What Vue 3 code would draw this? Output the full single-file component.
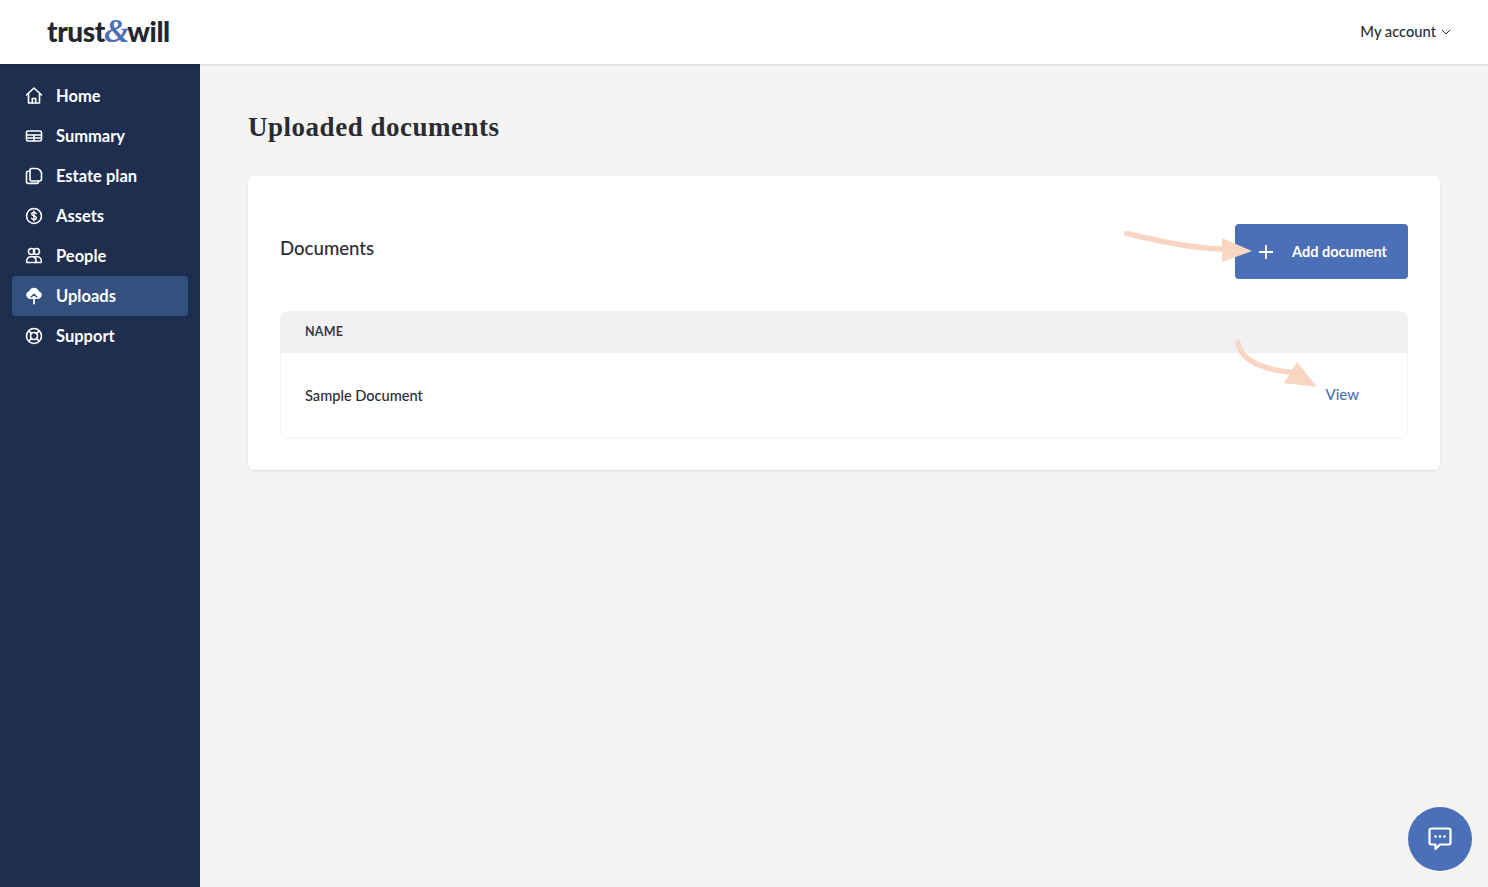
<script setup>
const nav = [
  { label: 'Home', icon: 'home' },
  { label: 'Summary', icon: 'summary' },
  { label: 'Estate plan', icon: 'estate' },
  { label: 'Assets', icon: 'assets' },
  { label: 'People', icon: 'people' },
  { label: 'Uploads', icon: 'uploads', active: true },
  { label: 'Support', icon: 'support' },
]
</script>

<template>
  <div class="app">
    <header class="topbar">
      <div class="logo">trust<span class="amp">&amp;</span>will</div>
      <div class="account">
        <span>My account</span>
        <svg class="chev" width="10" height="6" viewBox="0 0 10 6" fill="none"><path d="M1 1l4 4 4-4" stroke="#2a2c33" stroke-width="1"/></svg>
      </div>
    </header>
    <div class="body">
      <aside class="sidebar">
        <a v-for="item in nav" :key="item.label" class="nav-item" :class="{ active: item.active }">
          <svg class="nav-icon" width="20" height="20" viewBox="0 0 20 20" fill="none" stroke="#fff" stroke-width="1.6" stroke-linejoin="round" stroke-linecap="round">
            <template v-if="item.icon === 'home'">
              <path d="M2.500 9 10 2l7.500 7" />
              <path d="M4.500 7.500V17h11V7.500" />
              <path d="M8.300 17v-4.500h3.400V17" />
            </template>
            <template v-else-if="item.icon === 'summary'">
              <rect x="2.500" y="5" width="15" height="10" rx="1.500" />
              <path d="M2.500 9h15M2.500 12h15M10 9v6" />
            </template>
            <template v-else-if="item.icon === 'estate'">
              <path d="M7.500 2.500h4.500a5.500 5.500 0 0 1 5.500 5.500v5a2 2 0 0 1-2 2H7.500a1.500 1.500 0 0 1-1.500-1.500V4a1.500 1.500 0 0 1 1.500-1.500z" />
              <path d="M6 5.200H4a1.500 1.500 0 0 0-1.500 1.500v9.200A1.500 1.500 0 0 0 4 17.400h9a1.500 1.500 0 0 0 1.500-1.500V15" />
            </template>
            <template v-else-if="item.icon === 'assets'">
              <circle cx="10" cy="10" r="7.500" />
              <path d="M12.300 7.600c-.4-.8-1.200-1.200-2.300-1.200-1.300 0-2.300.7-2.300 1.700 0 2.400 4.700 1.300 4.700 3.700 0 1-1 1.800-2.400 1.800-1.200 0-2.100-.5-2.500-1.300M10 5v10" stroke-width="1.400" />
            </template>
            <template v-else-if="item.icon === 'people'">
              <circle cx="7.500" cy="5.500" r="3" />
              <circle cx="12.500" cy="5.500" r="3" />
              <path d="M2.700 16.500v-1.700a4 4 0 0 1 4-4h6.600a4 4 0 0 1 4 4v1.700z" />
              <path d="M10 11a4 4 0 0 1 2 3.500v2" />
            </template>
            <template v-else-if="item.icon === 'uploads'">
              <path d="M6 12.500a3.500 3.500 0 0 1-.6-6.900 4.800 4.800 0 0 1 9.200 0 3.500 3.500 0 0 1-.6 6.900z" fill="#fff" stroke-width="1" />
              <path d="M7.200 11 10 8.200l2.800 2.800" stroke="#34507f" stroke-width="1.400" />
              <path d="M10 11.500v6" stroke-width="1.800" />
            </template>
            <template v-else>
              <circle cx="10" cy="10" r="7.500" />
              <circle cx="10" cy="10" r="3.500" />
              <path d="m4.800 4.800 2.700 2.700M15.200 4.800l-2.700 2.700M4.800 15.200l2.700-2.700M15.200 15.200l-2.700-2.700" stroke-width="1.800" />
            </template>
          </svg>
          <span class="nav-label">{{ item.label }}</span>
        </a>
      </aside>
      <main class="main">
        <h1 class="title">Uploaded documents</h1>
        <section class="card">
          <div class="card-head">
            <h2 class="card-title">Documents</h2>
            <button class="add-btn">
              <svg width="14" height="14" viewBox="0 0 14 14" fill="none"><path d="M7 0v14M0 7h14" stroke="#fff" stroke-width="1.800"/></svg>
              <span class="add-label">Add document</span>
            </button>
          </div>
          <div class="table">
            <div class="thead"><span class="thead-label">NAME</span></div>
            <div class="row">
              <span class="doc-name">Sample Document</span>
              <a class="view">View</a>
            </div>
          </div>
        </section>
      </main>
    </div>

    <svg class="arrow arrow-one" width="130" height="40" viewBox="0 0 130 40" fill="none">
      <path d="M3 2.500C30 9 70 18 100 18" stroke="#f9d6c1" stroke-width="5.500" stroke-linecap="round"/>
      <path d="M98 7 128 20 98 31z" fill="#f9d6c1"/>
    </svg>
    <svg class="arrow arrow-two" width="84" height="50" viewBox="0 0 84 50" fill="none">
      <path d="M3 3C6 22 30 30 62 33" stroke="#f9d6c1" stroke-width="5.500" stroke-linecap="round"/>
      <path d="M62 22 82 47 49 43z" fill="#f9d6c1"/>
    </svg>

    <button class="chat">
      <svg width="26" height="26" viewBox="0 0 26 26" fill="none">
        <path d="M4.500 2.500h17a2 2 0 0 1 2 2v12a2 2 0 0 1-2 2H13l-4.500 4.500v-4.500h-4a2 2 0 0 1-2-2v-12a2 2 0 0 1 2-2z" stroke="#fff" stroke-width="2.200" stroke-linejoin="round"/>
        <circle cx="8.500" cy="10.500" r="1.300" fill="#fff"/><circle cx="13" cy="10.500" r="1.300" fill="#fff"/><circle cx="17.500" cy="10.500" r="1.300" fill="#fff"/>
      </svg>
    </button>
  </div>
</template>

<style scoped>
.app {
  position: relative;
  width: 1488px;
  height: 887px;
  overflow: hidden;
  background: #f5f4f2;
  font-family: Lato, "Liberation Sans", sans-serif;
  color: #2a2c33;
}
.topbar {
  position: relative;
  z-index: 2;
  height: 64px;
  box-sizing: border-box;
  display: flex;
  align-items: center;
  justify-content: space-between;
  padding: 0 37px 0 47px;
  background: #fff;
  box-shadow: 0 1px 2px rgba(0, 0, 0, 0.12);
}
.logo {
  font-family: Lato, sans-serif;
  font-size: 28px;
  font-weight: 900;
  letter-spacing: -0.4px;
  color: #24262d;
  line-height: 1;
  margin-top: -3px;
}
.amp {
  font-family: "Liberation Serif", serif;
  font-size: 33px;
  font-weight: 700;
  font-style: italic;
  color: #4c70b7;
  line-height: 0.7;
  margin: 0 -2px 0 -1px;
}
.account {
  display: flex;
  align-items: center;
  gap: 5px;
  font-size: 14.7px;
  font-weight: 500;
  margin-top: -1px;
  padding-bottom: 1px;
}
.chev { margin-top: 2px; }
.body {
  display: flex;
  height: 823px;
}
.sidebar {
  width: 200px;
  flex: none;
  box-sizing: border-box;
  padding: 12px;
  background: #1e2e4f;
  display: flex;
  flex-direction: column;
}
.nav-item {
  height: 40px;
  display: flex;
  align-items: center;
  gap: 12px;
  padding: 0 12px;
  border-radius: 4px;
  color: #fff;
  font-size: 16.5px;
  font-weight: 700;
}
.nav-item.active { background: #34507f; }
.nav-icon { flex: none; }
.main {
  flex: 1;
  box-sizing: border-box;
  padding: 48px;
}
.title {
  margin: 0 0 32px;
  height: 32px;
  font-family: "Liberation Serif", serif;
  font-size: 27px;
  line-height: 30px;
  font-weight: 700;
  letter-spacing: 0.52px;
  color: #2a2c33;
}
.card {
  box-sizing: border-box;
  height: 294px;
  padding: 48px 32px 32px;
  background: #fff;
  border-radius: 6px;
  box-shadow: 0 1px 2px rgba(0, 0, 0, 0.1);
}
.card-head {
  display: flex;
  align-items: flex-start;
  justify-content: space-between;
  height: 87px;
}
.card-title {
  margin: 11px 0 0;
  font-size: 18.6px;
  line-height: 26px;
  font-weight: 500;
}
.add-btn {
  width: 173px;
  height: 55px;
  box-sizing: border-box;
  padding: 0 21px 0 24px;
  display: flex;
  align-items: center;
  justify-content: space-between;
  border: none;
  border-radius: 4px;
  background: #4c70b7;
  color: #fff;
  font-family: inherit;
  font-size: 14.5px;
  font-weight: 700;
}
.add-label { margin-bottom: 1px; }
.table {
  height: 127px;
  box-sizing: border-box;
  border: 1px solid #f1f1f3;
  border-radius: 8px;
  overflow: hidden;
}
.thead {
  height: 41px;
  box-sizing: border-box;
  padding: 0 24px;
  display: flex;
  align-items: center;
  background: #f1f1f3;
  font-size: 12.5px;
  font-weight: 700;
  letter-spacing: 0.2px;
  color: #3a3c44;
}
.thead-label { margin-bottom: 3px; }
.row {
  height: 84px;
  box-sizing: border-box;
  padding: 0 48px 0 24px;
  display: flex;
  align-items: center;
  justify-content: space-between;
  font-size: 14.6px;
}
.doc-name { font-weight: 500; }
.view { color: #4c70b7; font-size: 15px; font-weight: 500; margin-top: -2px; }
.arrow { position: absolute; z-index: 3; }
.arrow-one { left: 1124px; top: 231px; }
.arrow-two { left: 1235px; top: 340px; }
.chat {
  position: absolute;
  right: 16px;
  bottom: 16px;
  width: 64px;
  height: 64px;
  padding: 0;
  border: none;
  border-radius: 50%;
  background: #4c70b7;
  display: flex;
  align-items: center;
  justify-content: center;
}
</style>
